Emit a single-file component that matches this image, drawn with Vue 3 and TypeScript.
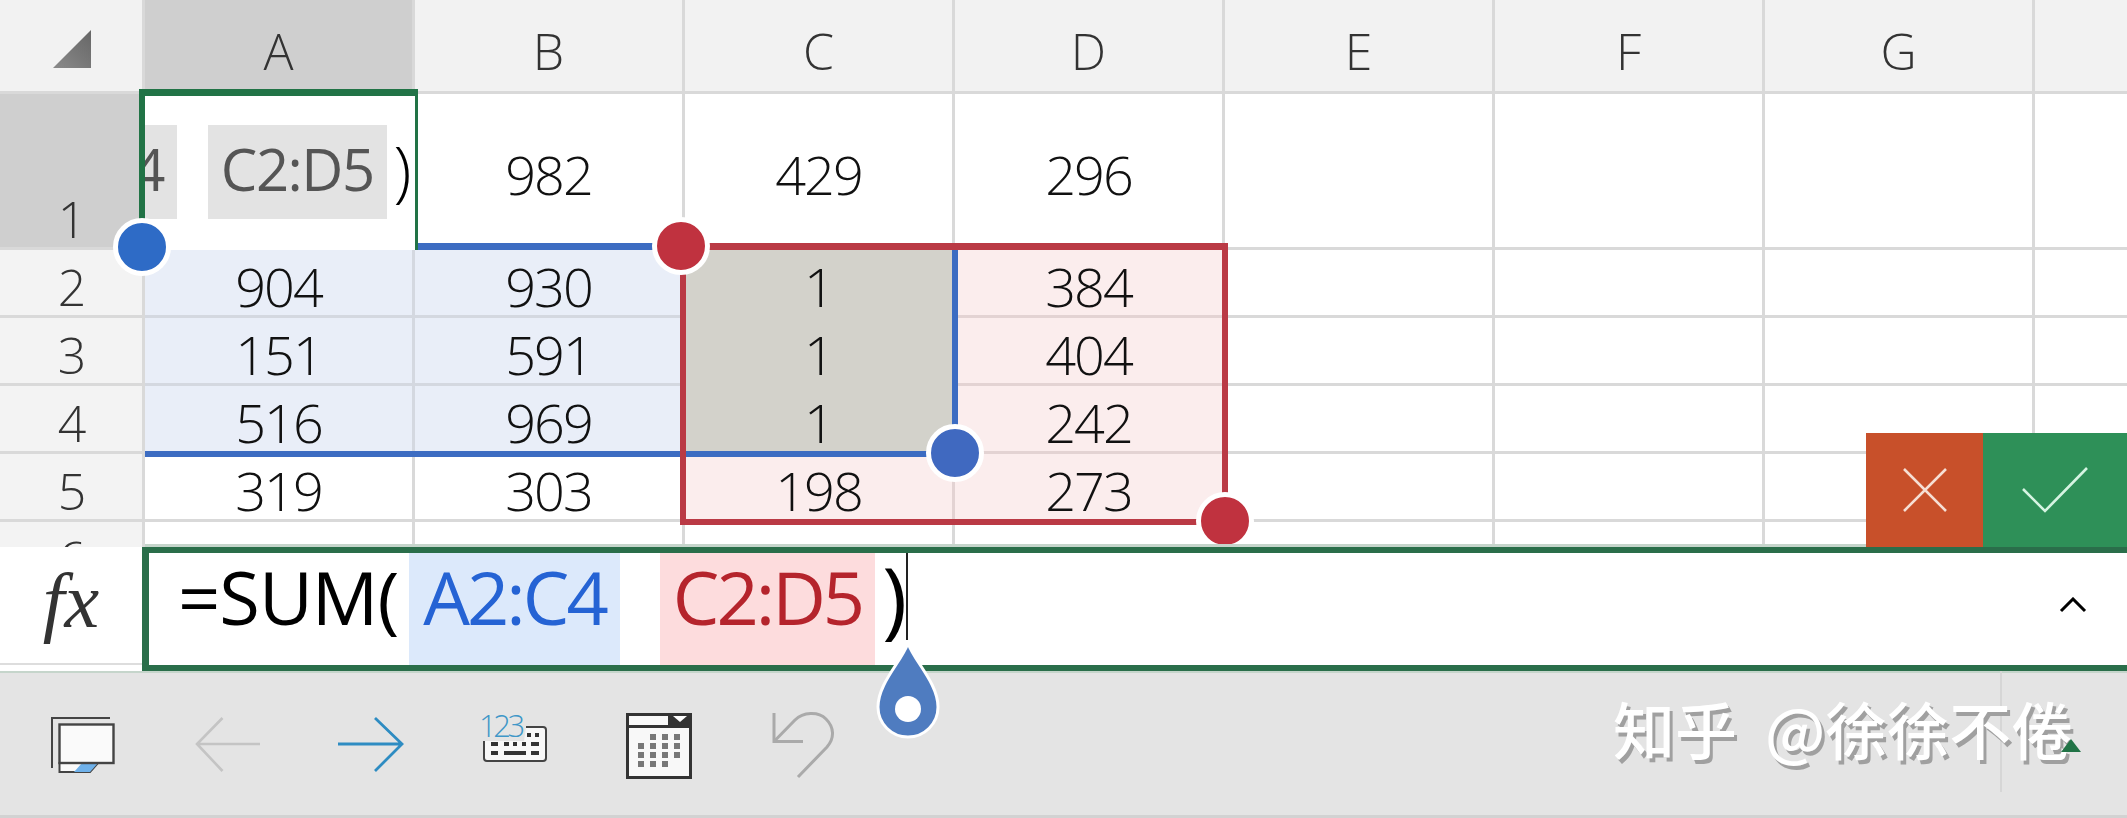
<template>
  <div class="app">
    <div class="sheet">
      <div class="grid">
        <div class="corner head">
          <svg class="corner-tri" width="40" height="40" viewBox="0 0 40 40">
            <defs>
              <linearGradient id="tri" x1="0" y1="1" x2="1" y2="0">
                <stop offset="0" stop-color="#8a8a8a" />
                <stop offset="1" stop-color="#666" />
              </linearGradient>
            </defs>
            <path d="M1 39 L39 1 V39 Z" fill="url(#tri)" />
          </svg>
        </div>
        <div
          v-for="col in cols"
          :key="col"
          class="col-head head"
          :class="{ active: col === 'A' }"
        >{{ col }}</div>

        <template v-for="row in rows" :key="row.n">
          <div class="row-head" :class="{ active: row.n === 1 }">{{ row.n }}</div>
          <div
            v-for="(val, i) in row.vals"
            :key="i"
            class="cell"
            :class="cellClass(row.n, i)"
          >{{ val }}</div>
        </template>
      </div>

      <div class="range range-blue"></div>
      <div class="range range-red"></div>

      <div class="edit-cell">
        <span class="chip">A2:C4</span>
        <span class="chip chip-last">C2:D5</span>
        <span class="paren">)</span>
      </div>

      <span class="handle h-blue h1"></span>
      <span class="handle h-blue2 h2"></span>
      <span class="handle h-red h3"></span>
      <span class="handle h-red h4"></span>

      <div class="confirm">
        <button class="btn cancel">
          <svg width="44" height="44" viewBox="0 0 44 44">
            <path d="M1 1 L43 43 M43 1 L1 43" stroke="#f6dfd4" stroke-width="2.6" fill="none" />
          </svg>
        </button>
        <button class="btn ok">
          <svg width="66" height="46" viewBox="0 0 66 46">
            <path d="M1 22 L23 44 L65 1" stroke="#d6f4e2" stroke-width="2.6" fill="none" />
          </svg>
        </button>
      </div>
    </div>

    <div class="formula-row">
      <div class="fx">fx</div>
      <div class="input">
        <span class="fn">=SUM(</span>
        <span class="ref ref-blue">A2:C4</span>
        <span class="ref ref-red">C2:D5</span>
        <span class="close">)</span>
        <span class="caret"></span>
        <svg class="chevron" width="28" height="16" viewBox="0 0 28 16">
          <path d="M2 14 L14 2 L26 14" stroke="#000" stroke-width="3" fill="none" />
        </svg>
      </div>
    </div>

    <div class="toolbar">
      <svg class="tool" viewBox="50 711 66 66">
        <path d="M52 768 V718 H110" stroke="#444" stroke-width="2" fill="none" />
        <path d="M59.5 763 V772 H90 L98 763 Z" fill="#fafafa" stroke="#444" stroke-width="2" />
        <path d="M74 772 L82 763 H98 L90 772 Z" fill="#6fb1ea" />
        <rect x="59.5" y="724.5" width="54" height="38.5" fill="#fafafa" stroke="#444" stroke-width="2.4" />
      </svg>
      <svg class="tool" viewBox="194 711 66 66">
        <path d="M260 744 H197 M222.5 718 L197 744 L222.5 771" stroke="#c4c4c4" stroke-width="2.6" fill="none" />
      </svg>
      <svg class="tool" viewBox="338 711 66 66">
        <path d="M338 744 H402 M375 718 L402 744 L375 771" stroke="#2e8cc2" stroke-width="2.8" fill="none" />
      </svg>
      <svg class="tool" viewBox="482 711 66 66">
        <path d="M526 727 H543 a3 3 0 0 1 3 3 V758 a3 3 0 0 1 -3 3 H487 a3 3 0 0 1 -3 -3 V741 H524 Z" fill="#f8f8f8" />
        <path d="M526 727 H543 a3 3 0 0 1 3 3 V758 a3 3 0 0 1 -3 3 H487 a3 3 0 0 1 -3 -3 V741" fill="none" stroke="#444" stroke-width="2" />
        <g fill="#333">
          <rect x="527" y="733" width="4" height="4" />
          <rect x="535" y="733" width="4" height="4" />
          <rect x="491" y="742" width="7" height="4" />
          <rect x="504" y="742" width="5" height="4" />
          <rect x="513" y="742" width="4" height="4" />
          <rect x="522" y="742" width="4" height="4" />
          <rect x="531" y="742" width="8" height="4" />
          <rect x="491" y="751" width="7" height="4" />
          <rect x="504" y="751" width="22" height="4" />
          <rect x="531" y="751" width="8" height="4" />
        </g>
        <text x="479" y="737" class="kbd-num">123</text>
      </svg>
      <svg class="tool" viewBox="626 711 66 66">
        <rect x="627.5" y="714.5" width="63" height="63" fill="#f8f8f8" stroke="#333" stroke-width="3" />
        <rect x="626" y="713" width="66" height="15" fill="#333" />
        <rect x="629" y="716" width="39" height="9" fill="#f8f8f8" />
        <path d="M673 716 H687 L680 722 Z" fill="#fff" />
        <g fill="#777">
          <template v-for="(cells, y) in calendar" :key="y">
            <rect v-for="x in cells" :key="x" :x="x" :y="y" width="6" height="6" />
          </template>
        </g>
      </svg>
      <svg class="tool" viewBox="770 711 66 66">
        <path d="M774 713 V741.5 H803" stroke="#aaa" stroke-width="3" fill="none" />
        <path d="M774 741.5 L795 720 C803 712 818 711 826 719 C834 727 835 738 827 747 L798 777" stroke="#aaa" stroke-width="3" fill="none" />
      </svg>

      <span class="divider"></span>
      <span class="watermark">知乎 @徐徐不倦</span>
      <svg class="corner-mark" width="20" height="13" viewBox="0 0 20 13">
        <path d="M10 0 L20 13 H0 Z" fill="#217346" />
      </svg>
    </div>

    <svg class="drop" width="66" height="100" viewBox="0 0 66 100">
      <path d="M33 2 C39 20 63 42 63 66 A30 30 0 0 1 3 66 C3 42 27 20 33 2 Z" fill="#4f7cc0" stroke="#fff" stroke-width="3" />
      <circle cx="33" cy="68" r="13" fill="#fff" />
    </svg>
  </div>
</template>

<script setup lang="ts">
const cols = ['A', 'B', 'C', 'D', 'E', 'F', 'G', '']

const rows = [
  { n: 1, vals: ['', '982', '429', '296', '', '', '', ''] },
  { n: 2, vals: ['904', '930', '1', '384', '', '', '', ''] },
  { n: 3, vals: ['151', '591', '1', '404', '', '', '', ''] },
  { n: 4, vals: ['516', '969', '1', '242', '', '', '', ''] },
  { n: 5, vals: ['319', '303', '198', '273', '', '', '', ''] },
  { n: 6, vals: ['', '', '', '', '', '', '', ''] },
]

// y -> x positions of the little date squares
const calendar: Record<number, number[]> = {
  734: [650, 662, 674],
  743: [638, 650, 662, 674],
  752: [638, 650, 662, 674],
  761: [638, 650, 662],
}

const cellClass = (n: number, col: number) => {
  const inBlue = n >= 2 && n <= 4 && col <= 2
  const inRed = n >= 2 && n <= 5 && (col === 2 || col === 3)
  if (inBlue && inRed) return 'both'
  if (inBlue) return 'blue'
  if (inRed) return 'red'
  return ''
}
</script>

<style scoped>
.app {
  position: relative;
  width: 2127px;
  height: 818px;
  overflow: hidden;
  background: #fff;
  font-family: "Open Sans", "Noto Sans CJK SC", sans-serif;
}

.sheet {
  position: relative;
  z-index: 1;
  height: 547px;
  overflow: hidden;
}

/* pale edge just above the formula bar, buttons sit over it */
.sheet::after {
  content: "";
  position: absolute;
  left: 145px;
  right: 0;
  bottom: 0;
  height: 3px;
  background: #c5d5cb;
}

.grid {
  display: grid;
  grid-template-columns: 145px repeat(8, 270px);
  grid-template-rows: 94px 156px repeat(5, 68px);
}

.head {
  background: #f2f2f2;
  border-right: 3px solid #d9d9d9;
  border-bottom: 3px solid #d9d9d9;
}

.corner {
  position: relative;
}

.corner-tri {
  position: absolute;
  left: 52px;
  top: 29px;
}

.col-head {
  display: flex;
  align-items: center;
  justify-content: center;
  font-size: 50px;
  font-weight: 300;
  color: #333;
  padding-top: 10px;
  box-sizing: border-box;
}

.col-head.active {
  background: #cfcfcf;
}

.row-head {
  display: flex;
  align-items: center;
  justify-content: center;
  background: #f3f3f3;
  border-right: 3px solid #d9d9d9;
  border-bottom: 3px solid #d9d9d9;
  font-size: 50px;
  font-weight: 300;
  letter-spacing: -2px;
  color: #333;
  padding-top: 8px;
  line-height: 1;
  box-sizing: border-box;
}

.row-head.active {
  background: #cfcfcf;
  align-items: flex-end;
  padding-bottom: 3px;
}

.cell {
  display: flex;
  align-items: center;
  justify-content: center;
  border-right: 3px solid #d9d9d9;
  border-bottom: 3px solid #d9d9d9;
  font-size: 54px;
  font-weight: 300;
  letter-spacing: -2px;
  color: #111;
  padding-top: 7px;
  line-height: 1;
  box-sizing: border-box;
}

.cell.blue {
  background: #e9eef8;
  border-color: #d4d8e0;
}

.cell.red {
  background: #fbeded;
  border-color: #e3d3d3;
}

.cell.both {
  background: #d3d2cb;
  border-color: #d3d2cb;
}

.range {
  position: absolute;
  box-sizing: border-box;
}

.range-blue {
  left: 145px;
  top: 243px;
  width: 813px;
  height: 214px;
  border: solid #3c6cc2;
  border-width: 7px 6px 6px 0;
}

.range-red {
  left: 680px;
  top: 243px;
  width: 548px;
  height: 282px;
  border: 6px solid #ba3a45;
  border-top-width: 7px;
}

.edit-cell {
  position: absolute;
  left: 139px;
  top: 89px;
  width: 279px;
  height: 161px;
  box-sizing: border-box;
  border: solid #217346;
  border-width: 7px 3px 0 6px;
  background: #fff;
  padding: 29px 5px 0 0;
  overflow: hidden;
  display: flex;
  justify-content: flex-end;
  align-items: flex-start;
  font-size: 58px;
  letter-spacing: -1.5px;
  color: #555;
}

.chip {
  flex-shrink: 0;
  height: 94px;
  line-height: 88px;
  padding: 0 13px;
  background: #e3e3e3;
  margin-right: 31px;
}

.chip-last {
  margin-right: 7px;
}

.paren {
  flex-shrink: 0;
  font-size: 66px;
  line-height: 88px;
  color: #000;
  font-weight: 300;
}

.handle {
  position: absolute;
  width: 48px;
  height: 48px;
  border: 5px solid #fff;
  border-radius: 50%;
  transform: translate(-29px, -29px);
  box-sizing: content-box;
}

.h-blue { background: #2e6bc6; }
.h-blue2 { background: #4069c0; }
.h-red { background: #c0323f; }

.h1 { left: 142px; top: 247px; }
.h2 { left: 955px; top: 453px; }
.h3 { left: 681px; top: 246px; }
.h4 { left: 1225px; top: 521px; }

.confirm {
  position: absolute;
  z-index: 2;
  right: 0;
  bottom: 0;
  display: flex;
  height: 114px;
}

.btn {
  display: flex;
  align-items: center;
  justify-content: center;
  border: none;
  padding: 0;
}

.cancel {
  width: 117px;
  background: #c8502a;
}

.ok {
  width: 144px;
  background: #2e9058;
}

.formula-row {
  position: relative;
  display: flex;
  height: 124px;
}

.fx {
  width: 142px;
  height: 118px;
  border-bottom: 2px solid #ddd;
  box-sizing: border-box;
  text-align: center;
  font-family: "Liberation Serif", serif;
  font-style: italic;
  font-size: 78px;
  line-height: 108px;
  color: #333;
}

.input {
  position: relative;
  flex: 1;
  display: flex;
  align-items: stretch;
  box-sizing: border-box;
  border: solid #2a6e4a;
  border-width: 6px 0 6px 7px;
  padding-left: 29px;
  font-size: 74px;
  line-height: 88px;
  color: #000;
  letter-spacing: -1px;
}

.fn {
  width: 231px;
}

.ref {
  width: 211px;
  text-align: center;
  letter-spacing: -3px;
}

.ref-blue {
  background: #dce9fb;
  color: #2563d4;
  margin-right: 40px;
}

.ref-red {
  width: 215px;
  background: #fddcdd;
  color: #b5242c;
}

.close {
  width: 31px;
  text-align: right;
  font-size: 84px;
}

.caret {
  width: 2px;
  height: 87px;
  background: #222;
}

.chevron {
  position: absolute;
  right: 40px;
  top: 44px;
}

.toolbar {
  position: relative;
  display: flex;
  align-items: flex-start;
  gap: 78px;
  height: 147px;
  box-sizing: border-box;
  padding: 40px 0 0 50px;
  background: #e4e4e4;
  border-bottom: 3px solid #d2d2d2;
  box-shadow: inset 0 2px 0 #c5d5cb;
}

.tool {
  width: 66px;
  height: 66px;
  overflow: visible;
}

.kbd-num {
  font-family: "Open Sans", sans-serif;
  font-weight: 300;
  font-size: 31px;
  letter-spacing: -3.4px;
  fill: #3f97c8;
}

.divider {
  position: absolute;
  left: 2000px;
  top: 0;
  width: 2px;
  height: 121px;
  background: #d6d6d6;
}

.corner-mark {
  position: absolute;
  left: 2061px;
  top: 68px;
}

.watermark {
  position: absolute;
  left: 1613px;
  top: 13px;
  font-family: "Noto Sans CJK SC", "Noto Sans", sans-serif;
  font-size: 62px;
  font-weight: 500;
  word-spacing: 14px;
  line-height: 88px;
  white-space: nowrap;
  color: #fff;
  text-shadow: 3px 4px 0 #a0a0a0;
}

.drop {
  position: absolute;
  z-index: 2;
  left: 875px;
  top: 641px;
}
</style>

<style>
html, body {
  margin: 0;
  padding: 0;
  overflow: hidden;
}
</style>
